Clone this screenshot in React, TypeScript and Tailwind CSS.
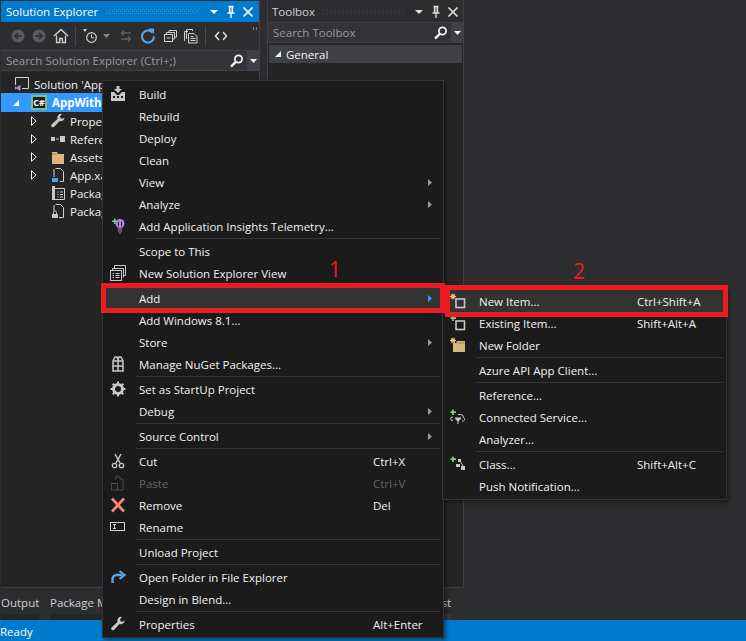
import { ReactNode } from 'react';
import clsx from 'clsx';

const font = 'font-["Open_Sans","Noto_Sans",sans-serif]';

function Icon({ children, className }: { children: ReactNode; className?: string }) {
  return (
    <svg viewBox="0 0 16 16" width="16" height="16" className={clsx('shrink-0', className)}>
      {children}
    </svg>
  );
}

const Grip = ({ color }: { color: string }) => (
  <svg className="grow w-0 h-[5px] mx-2" height="5">
    <pattern id={`grip-${color}`} width="4" height="4" patternUnits="userSpaceOnUse">
      <rect width="1" height="1" fill={color} />
      <rect x="2" y="2" width="1" height="1" fill={color} />
    </pattern>
    <rect width="100%" height="5" fill={`url(#grip-${color})`} />
  </svg>
);

const TitleButtons = ({ color }: { color: string }) => (
  <div className="flex items-center gap-[3px] shrink-0">
    <svg width="14" height="14" viewBox="0 0 14 14"><path d="M3 5h8l-4 4z" fill={color} /></svg>
    <svg width="14" height="14" viewBox="0 0 14 14">
      <path d="M4.500 1.500h5M5.500 1.500v6M8.500 1.500v6M3.500 8h7M7 8v5" stroke={color} strokeWidth="1.300" fill="none" />
      <rect x="6" y="2" width="2" height="5.500" fill={color} opacity=".4" />
    </svg>
    <svg width="14" height="14" viewBox="0 0 14 14"><path d="M2.500 2.500l9 9M11.500 2.500l-9 9" stroke={color} strokeWidth="1.700" /></svg>
  </div>
);

const SearchBox = ({ label }: { label: string }) => (
  <div className="flex h-[21px] bg-[#333337] border-y border-[#3f3f46] items-center">
    <span className="grow pl-[5px] pt-[1px] text-[#999999] text-[11.5px]">{label}</span>
    <svg width="16" height="16" viewBox="0 0 16 16" className="mr-[2px]">
      <circle cx="9.500" cy="6" r="3.600" fill="none" stroke="#f1f1f1" strokeWidth="1.800" />
      <path d="M6.800 8.800L2 13.600" stroke="#f1f1f1" strokeWidth="2.400" />
    </svg>
    <div className="w-[12px] h-full bg-[#3f3f46] flex items-center justify-center">
      <svg width="7" height="4" viewBox="0 0 7 4"><path d="M0 0h7L3.500 4z" fill="#f1f1f1" /></svg>
    </div>
  </div>
);

const ToolbarIcon = ({ children }: { children: ReactNode }) => (
  <svg viewBox="0 0 16 16" width="16" height="16" className="shrink-0">{children}</svg>
);

function ExplorerToolbar() {
  return (
    <div className="relative h-[28px] flex items-center pl-[9px] bg-[#2d2d30]">
      <ToolbarIcon>
        <circle cx="8" cy="8" r="6.500" fill="#5a5a5c" />
        <path d="M11.500 8H6M8 5L5 8l3 3" stroke="#2d2d30" strokeWidth="1.600" fill="none" />
      </ToolbarIcon>
      <div className="w-[5px]" />
      <ToolbarIcon>
        <circle cx="8" cy="8" r="6.500" fill="#5a5a5c" />
        <path d="M4.500 8H10M8 5l3 3-3 3" stroke="#2d2d30" strokeWidth="1.600" fill="none" />
      </ToolbarIcon>
      <div className="w-[6px]" />
      <ToolbarIcon>
        <path d="M1 8l7-6.500L15 8" fill="none" stroke="#d0d0d0" strokeWidth="1.500" />
        <path d="M3.500 7.500v7h3.200v-4h2.600v4h3.200v-7" fill="none" stroke="#d0d0d0" strokeWidth="1.300" />
      </ToolbarIcon>
      <div className="w-[7px] h-[20px] border-r border-[#46464a] mr-[7px]" />
      <ToolbarIcon>
        <path d="M0 1h4L2 4z" fill="#d0d0d0" />
        <circle cx="8.500" cy="9.500" r="4.800" fill="none" stroke="#d0d0d0" strokeWidth="1.200" />
        <path d="M8.500 6.500v3.300h2.600" fill="none" stroke="#d0d0d0" />
      </ToolbarIcon>
      <svg width="7" height="4" viewBox="0 0 7 4" className="ml-[4px] mr-[8px]"><path d="M0 0h7L3.500 4z" fill="#8a8a8a" /></svg>
      <ToolbarIcon>
        <path d="M13 5H4M6 2.500L3.500 5 6 7.500M3 11h9M10 8.500l2.500 2.500L10 13.500" fill="none" stroke="#5f5f61" strokeWidth="1.500" />
      </ToolbarIcon>
      <div className="w-[6px]" />
      <ToolbarIcon>
        <path d="M12.500 4.500a6 6 0 1 0 1.500 4" fill="none" stroke="#4fa6ea" strokeWidth="2.200" />
        <path d="M8.500 0.500h5.500v5.500z" fill="#4fa6ea" />
      </ToolbarIcon>
      <div className="w-[6px]" />
      <ToolbarIcon>
        <rect x="2.500" y="6.500" width="8" height="7" fill="#2d2d30" stroke="#d0d0d0" />
        <path d="M4.500 6V4.500H12.500V11H11M7 4V2.500H14.500V9H13" fill="none" stroke="#d0d0d0" />
        <path d="M4.500 10h4" stroke="#d0d0d0" />
      </ToolbarIcon>
      <div className="w-[5px]" />
      <ToolbarIcon>
        <path d="M3.500 11V1.500H9.500V3M1.500 13V3.500H5" fill="none" stroke="#d0d0d0" />
        <path d="M5.500 5.500H11l3 3v6.500H5.500z" fill="#2d2d30" stroke="#d0d0d0" />
        <path d="M7.500 8.500h3M7.500 10.500h5M7.500 12.500h5" stroke="#d0d0d0" />
      </ToolbarIcon>
      <div className="w-[7px] h-[20px] border-r border-[#46464a] mr-[7px]" />
      <ToolbarIcon>
        <path d="M6 4L2.500 8 6 12M10 4l3.500 4-3.500 4" fill="none" stroke="#e0e0e0" strokeWidth="1.500" />
      </ToolbarIcon>
      <svg width="5" height="4" viewBox="0 0 5 4" className="absolute right-[1px] top-[5px]">
        <path d="M0 0h1v3H0zM3 0h1v3H3z" fill="#77777a" />
      </svg>
    </div>
  );
}

const TreeArrow = () => (
  <svg width="6" height="10" viewBox="0 0 6 10"><path d="M.5.700v8.600L5.200 5z" fill="none" stroke="#f1f1f1" /></svg>
);

function TreeRow({ arrow, icon, label }: { arrow?: boolean; icon: ReactNode; label: string }) {
  return (
    <div className="h-[18px] flex items-center whitespace-nowrap pl-[30px]">
      <div className="w-[19px] shrink-0">{arrow && <TreeArrow />}</div>
      {icon}
      <span className="ml-[4px] pt-[1px] text-[#f1f1f1] text-[11.5px]">{label}</span>
    </div>
  );
}

const wrench = (
  <Icon><path d="M14.500 4.500a3.800 3.800 0 0 1-5 3.600L4 14a1.800 1.800 0 0 1-2.500-2.500l6-5.500a3.800 3.800 0 0 1 4.500-5l-2 2.200.4 2.100 2.100.4z" fill="#c8c8c8" /></Icon>
);

function SolutionTree() {
  return (
    <div className="grow bg-[#252526] pt-[4px] overflow-hidden">
      <div className="h-[18px] flex items-center pl-[13px] whitespace-nowrap">
        <Icon>
          <path d="M1.500 9V1.500H14.500V12.500H8" fill="none" stroke="#d0d0d0" />
          <path d="M1 10l1.500 1.500L5 9.500h1.500v5H5l-2.500-2L1 14z" fill="#b180d7" />
        </Icon>
        <span className="ml-[4px] pt-[1px] text-[#f1f1f1] text-[11.5px]">Solution 'AppWithNewItem'</span>
      </div>
      <div className="h-[19px] flex items-center pl-[12px] bg-[#3399ff] whitespace-nowrap">
        <svg width="6" height="6" viewBox="0 0 6 6"><path d="M6 0v6H0z" fill="#fff" /></svg>
        <div className="ml-[12px] w-[16px] h-[15px] bg-[#1e1e1e] border-2 border-[#7fbf7f] flex items-center justify-center text-[9px] leading-none font-bold text-white">C#</div>
        <span className="ml-[5px] pt-[1px] text-white text-[11.5px] font-bold">AppWithNewItem</span>
      </div>
      <TreeRow arrow label="Properties" icon={wrench} />
      <TreeRow arrow label="References" icon={
        <Icon><path d="M1 6h4v4H1zM10 5h5v6h-5z" fill="#c8c8c8" /><path d="M6 8h3" stroke="#c8c8c8" /></Icon>
      } />
      <TreeRow arrow label="Assets" icon={
        <Icon><path d="M2 3h5l1 2h6v10H2z" fill="#dcb67a" /><path d="M2 5h5" stroke="#9e8050" /></Icon>
      } />
      <TreeRow arrow label="App.xaml" icon={
        <Icon>
          <path d="M5.500 1.500H10.500L13.500 4.500V14.500H10M4 10V2" fill="none" stroke="#d0d0d0" />
          <path d="M2 11h6v4H2z" fill="#3ea8f0" />
        </Icon>
      } />
      <TreeRow label="Package.appxmanifest" icon={
        <Icon>
          <path d="M2 1h3v14H2z" fill="#c8c8c8" />
          <path d="M5 3.500h9.500v11H5M7.500 7h1M10 7h3M7.500 9.500h1M10 9.500h3M7.500 12h1M10 12h3" fill="none" stroke="#d0d0d0" />
        </Icon>
      } />
      <TreeRow label="Package_TemporaryKey.pfx" icon={
        <Icon>
          <path d="M5.500 1.500H10.500L13.500 4.500V14.500H9M4 8V2" fill="none" stroke="#d0d0d0" />
          <rect x="2" y="11" width="6" height="4" fill="#c8c8c8" />
          <path d="M3.500 11V9.500a1.500 1.500 0 0 1 3 0V11" fill="none" stroke="#c8c8c8" />
        </Icon>
      } />
    </div>
  );
}

function MenuSep() {
  return (
    <div className="h-[3px] flex items-center pl-[33px] pr-[3px]">
      <div className="h-px w-full bg-[#333337]" />
    </div>
  );
}

function MenuRow({
  icon, label, shortcut, arrow, disabled, active, labelWidth,
}: {
  icon?: ReactNode; label: string; shortcut?: string; arrow?: boolean; disabled?: boolean; active?: boolean; labelWidth: string;
}) {
  return (
    <div className={clsx('h-[22px] flex items-center whitespace-nowrap text-[11.5px]', active && 'bg-[#333334]', disabled ? 'text-[#656565]' : 'text-[#f1f1f1]')}>
      <div className="w-[36px] shrink-0 pl-[7px]">{icon}</div>
      <span className={clsx('shrink-0 pt-[1px]', labelWidth)}>{label}</span>
      {shortcut && <span className="pt-[1px]">{shortcut}</span>}
      {arrow && (
        <svg width="4" height="7" viewBox="0 0 4 7" className="ml-auto mr-[11px]">
          <path d="M0 0l4 3.500L0 7z" fill={active ? '#3399ff' : '#999999'} />
        </svg>
      )}
    </div>
  );
}

function MainMenu() {
  const w = 'w-[234px]';
  const sep = <MenuSep />;
  return (
    <div className="absolute left-[102px] top-[80px] w-[342px] h-[558px] py-[2px] bg-[#1b1b1c] border border-[#333337] shadow-[2px_2px_4px_rgba(0,0,0,0.45)]">
      <MenuRow labelWidth={w} label="Build" icon={
        <Icon>
          <path d="M6.500 0h3v3H12L8 7 4 3h2.500z" fill="#c8c8c8" />
          <path d="M1 6h3l3 3h2l3-3h3v9H1z" fill="#c8c8c8" />
          <path d="M3 10h2v2H3zM7 10h2v2H7zM11 10h2v2h-2z" fill="#1b1b1c" />
        </Icon>
      } />
      <MenuRow labelWidth={w} label="Rebuild" />
      <MenuRow labelWidth={w} label="Deploy" />
      <MenuRow labelWidth={w} label="Clean" />
      <MenuRow labelWidth={w} label="View" arrow />
      <MenuRow labelWidth={w} label="Analyze" arrow />
      <MenuRow labelWidth={w} label="Add Application Insights Telemetry..." icon={
        <Icon>
          <path d="M2 2.500h2V0.500h1.500V2.500h2V4h-2v2H4V4H2z" fill="#7fd07f" />
          <circle cx="10" cy="5.500" r="4.500" fill="#b180d7" />
          <path d="M8.500 4v4M11.500 4v4" stroke="#1b1b1c" />
          <path d="M7.500 11h5M8 13h4M9 15h2" stroke="#b180d7" strokeWidth="1.200" />
        </Icon>
      } />
      {sep}
      <MenuRow labelWidth={w} label="Scope to This" />
      <MenuRow labelWidth={w} label="New Solution Explorer View" icon={
        <Icon>
          <path d="M4.500 3V.500h11v10H13" fill="none" stroke="#c8c8c8" />
          <path d="M2.500 5.500V3.500h11v9" fill="none" stroke="#c8c8c8" />
          <rect x=".500" y="5.500" width="11" height="10" fill="#1b1b1c" stroke="#c8c8c8" />
          <path d="M2.500 8.500h1.500M5.500 8.500h4M2.500 10.500h1.500M5.500 10.500h4M2.500 12.500h1.500M5.500 12.500h4" stroke="#c8c8c8" />
        </Icon>
      } />
      {sep}
      <MenuRow labelWidth={w} label="Add" arrow active />
      <MenuRow labelWidth={w} label="Add Windows 8.1..." />
      <MenuRow labelWidth={w} label="Store" arrow />
      <MenuRow labelWidth={w} label="Manage NuGet Packages..." icon={
        <Icon>
          <path d="M3 5h10v10H3zM3 5l2-4h2l1 3 1-3h2l2 4" fill="none" stroke="#c8c8c8" strokeWidth="1.500" />
          <path d="M3 10h10M8 5v10" stroke="#c8c8c8" strokeWidth="1.500" />
        </Icon>
      } />
      {sep}
      <MenuRow labelWidth={w} label="Set as StartUp Project" icon={
        <Icon>
          <circle cx="8" cy="8" r="4.500" fill="none" stroke="#c8c8c8" strokeWidth="3" />
          <path d="M8 .500v15M.500 8h15M2.700 2.700l10.600 10.600M13.300 2.700L2.700 13.300" stroke="#c8c8c8" strokeWidth="2" strokeDasharray="2.500 10" />
        </Icon>
      } />
      <MenuRow labelWidth={w} label="Debug" arrow />
      {sep}
      <MenuRow labelWidth={w} label="Source Control" arrow />
      {sep}
      <MenuRow labelWidth={w} label="Cut" shortcut="Ctrl+X" icon={
        <Icon>
          <path d="M5 1l5 9M11 1L6 10" fill="none" stroke="#c8c8c8" strokeWidth="1.500" />
          <circle cx="4.500" cy="12.500" r="2.200" fill="none" stroke="#c8c8c8" strokeWidth="1.300" />
          <circle cx="11.500" cy="12.500" r="2.200" fill="none" stroke="#c8c8c8" strokeWidth="1.300" />
        </Icon>
      } />
      <MenuRow labelWidth={w} label="Paste" shortcut="Ctrl+V" disabled icon={
        <Icon>
          <path d="M5.500 4.500V2.500H7V1h2v1.500h1.500V4M10.500 4.500h2.500V15H7.500" fill="none" stroke="#4a4a4a" />
          <rect x="1.500" y="8.500" width="6" height="6.500" fill="none" stroke="#4a4a4a" />
        </Icon>
      } />
      <MenuRow labelWidth={w} label="Remove" shortcut="Del" icon={
        <Icon><path d="M2 1.500l12 13M14 1.500L2 14.500" stroke="#f48771" strokeWidth="2.800" /></Icon>
      } />
      <MenuRow labelWidth={w} label="Rename" icon={
        <Icon>
          <rect x=".500" y="3.500" width="14" height="8" fill="none" stroke="#d0d0d0" />
          <path d="M3 5.500h3M3 9.500h3M4.500 5.500v4" stroke="#d0d0d0" />
        </Icon>
      } />
      {sep}
      <MenuRow labelWidth={w} label="Unload Project" />
      {sep}
      <MenuRow labelWidth={w} label="Open Folder in File Explorer" icon={
        <Icon>
          <path d="M2.500 14V10a4 4 0 0 1 4-4h6" fill="none" stroke="#4fa6ea" strokeWidth="2.400" />
          <path d="M9.500 2l5 4-5 4" fill="none" stroke="#4fa6ea" strokeWidth="2.200" />
        </Icon>
      } />
      <MenuRow labelWidth={w} label="Design in Blend..." />
      {sep}
      <MenuRow labelWidth={w} label="Properties" shortcut="Alt+Enter" icon={wrench} />
    </div>
  );
}

const Spark = () => (
  <path d="M3 .500v6M0 3.500h6M1 1.500l4 4M5 1.500l-4 4" stroke="#f0c674" strokeWidth="1.100" />
);

function SubMenu() {
  const w = 'w-[158px]';
  const sep = <MenuSep />;
  return (
    <div className="absolute left-[442px] top-[287px] w-[285px] h-[213px] py-[2px] bg-[#1b1b1c] border border-[#333337] shadow-[2px_2px_4px_rgba(0,0,0,0.45)]">
      <MenuRow labelWidth={w} label="New Item..." shortcut="Ctrl+Shift+A" active icon={
        <Icon>
          <rect x="6" y="6" width="8.500" height="8.500" fill="none" stroke="#c8c8c8" strokeWidth="1.600" />
          <Spark />
        </Icon>
      } />
      <MenuRow labelWidth={w} label="Existing Item..." shortcut="Shift+Alt+A" icon={
        <Icon>
          <rect x="6" y="6" width="8.500" height="8.500" fill="none" stroke="#c8c8c8" strokeWidth="1.600" />
          <path d="M3 .500v5.500M.500 3.200h5.500" stroke="#7fd07f" strokeWidth="1.700" />
        </Icon>
      } />
      <MenuRow labelWidth={w} label="New Folder" icon={
        <Icon>
          <path d="M3 6h3l1-2h8v11H3z" fill="#dcb67a" />
          <path d="M6 6h9" stroke="#9e8050" />
          <Spark />
        </Icon>
      } />
      {sep}
      <MenuRow labelWidth={w} label="Azure API App Client..." />
      {sep}
      <MenuRow labelWidth={w} label="Reference..." />
      <MenuRow labelWidth={w} label="Connected Service..." icon={
        <Icon>
          <path d="M3 .500v5.500M.500 3.200h5.500" stroke="#7fd07f" strokeWidth="1.700" />
          <path d="M3 11.500H2A1.800 1.800 0 0 1 2 8h1M8 5.500h2.500a3 3 0 0 1 3 3 2 2 0 0 1 0 3.500H12" fill="none" stroke="#c8c8c8" />
          <path d="M5 9h6l-2 2.500h-2zM8 11v4" fill="#c8c8c8" stroke="#c8c8c8" />
        </Icon>
      } />
      <MenuRow labelWidth={w} label="Analyzer..." />
      {sep}
      <MenuRow labelWidth={w} label="Class..." shortcut="Shift+Alt+C" icon={
        <Icon>
          <path d="M3 .500v5.500M.500 3.200h5.500" stroke="#7fd07f" strokeWidth="1.700" />
          <path d="M8 3h3v3H8zM6 8h4v3H6zM11 10h4v4h-4z" fill="#c8c8c8" />
          <path d="M10 5l3 5" stroke="#c8c8c8" />
        </Icon>
      } />
      <MenuRow labelWidth={w} label="Push Notification..." />
    </div>
  );
}

function RedBox({ className }: { className: string }) {
  return <div className={clsx('absolute border-[5px] border-[#ed1c24] pointer-events-none', className)} />;
}

export default function App() {
  return (
    <div className={clsx('relative w-[746px] h-[641px] overflow-hidden flex flex-col bg-[#2d2d30]', font)}>
      <div className="h-[588px] flex shrink-0 pt-[1px] pl-[1px]">
        <section className="w-[259px] flex flex-col border-r border-b border-[#3f3f46]">
          <div className="h-[21px] bg-[#007acc] flex items-center pl-[5px] pr-[4px] shrink-0">
            <span className="text-white text-[11.5px] pt-[1px] whitespace-nowrap shrink-0">Solution Explorer</span>
            <Grip color="#3f9bd9" />
            <TitleButtons color="#ffffff" />
          </div>
          <ExplorerToolbar />
          <SearchBox label="Search Solution Explorer (Ctrl+;)" />
          <SolutionTree />
        </section>
        <section className="ml-[7px] w-[197px] flex flex-col border border-[#3f3f46] border-t-0">
          <div className="h-[21px] flex items-center pl-[4px] pr-[3px] shrink-0">
            <span className="text-[#d0d0d0] text-[11.5px] pt-[1px] whitespace-nowrap shrink-0">Toolbox</span>
            <Grip color="#46464a" />
            <TitleButtons color="#e0e0e0" />
          </div>
          <SearchBox label="Search Toolbox" />
          <div className="grow bg-[#252526] p-[1px] pt-[2px]">
            <div className="h-[18px] bg-[#3f3f46] flex items-center pl-[6px]">
              <svg width="6" height="6" viewBox="0 0 6 6"><path d="M6 0v6H0z" fill="#f1f1f1" /></svg>
              <span className="ml-[5px] pt-[1px] text-[#f1f1f1] text-[11.5px]">General</span>
            </div>
          </div>
        </section>
      </div>

      <div className="grow w-[451px] pl-[1px] flex items-start text-[11.5px] text-[#d0d0d0]">
        <div className="w-[38px] h-full border-b-[6px] border-[#252526] flex items-center whitespace-nowrap pt-[4px]">Output</div>
        <div className="ml-[11px] h-full border-b-[6px] border-[#252526] flex items-center whitespace-nowrap pt-[4px]">Package Manager Console</div>
        <div className="ml-auto h-full border-b-[6px] border-[#3a3a3d] flex items-center whitespace-nowrap pt-[4px]">Error List</div>
      </div>

      <footer className="h-[21px] bg-[#007acc] flex items-center text-white text-[11.5px] pt-[3px] shrink-0">Ready</footer>

      <MainMenu />
      <SubMenu />
      <RedBox className="left-[101px] top-[283px] w-[344px] h-[30px]" />
      <RedBox className="left-[445px] top-[285px] w-[283px] h-[32px]" />
      <span className="absolute left-[329px] top-[255px] text-[#ed1c24] text-[21px] leading-[28px]">1</span>
      <span className="absolute left-[573px] top-[257px] text-[#ed1c24] text-[21px] leading-[28px]">2</span>
    </div>
  );
}
